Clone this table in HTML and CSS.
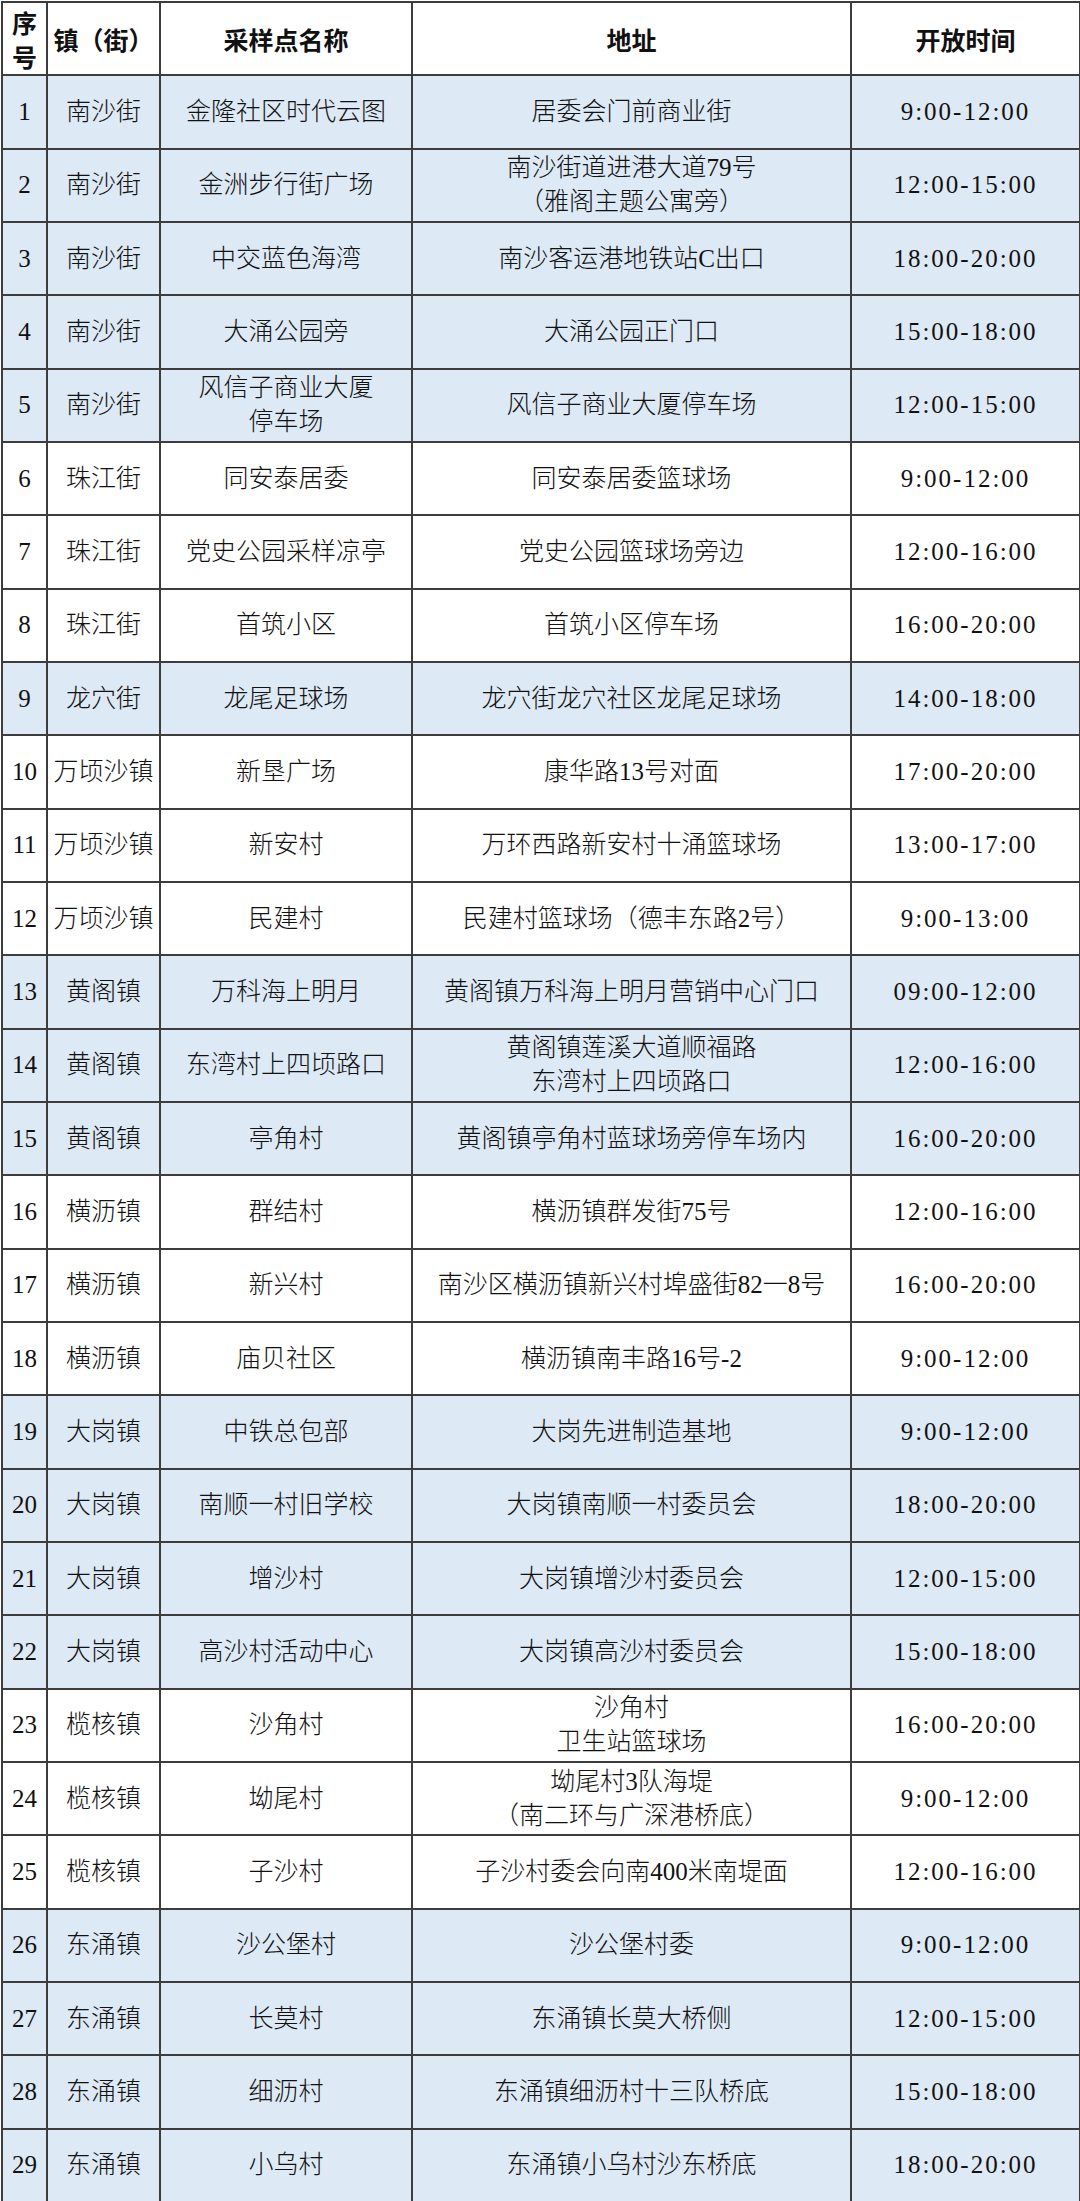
FILE: index.html
```html
<!DOCTYPE html>
<html lang="zh-CN">
<head>
<meta charset="utf-8">
<title>核酸采样点</title>
<link rel="stylesheet" href="styles.css">
</head>
<body>
<table class="sheet">
  <colgroup>
    <col class="c-no">
    <col class="c-town">
    <col class="c-name">
    <col class="c-addr">
    <col class="c-time">
  </colgroup>
  <thead>
    <tr class="head">
      <th class="no-head">序号</th>
      <th>镇（街）</th>
      <th>采样点名称</th>
      <th>地址</th>
      <th>开放时间</th>
    </tr>
  </thead>
  <tbody>
    <tr class="blue"><td>1</td><td>南沙街</td><td>金隆社区时代云图</td><td>居委会门前商业街</td><td class="time">9:00-12:00</td></tr>
    <tr class="blue"><td>2</td><td>南沙街</td><td>金洲步行街广场</td><td>南沙街道进港大道79号<br>（雅阁主题公寓旁）</td><td class="time">12:00-15:00</td></tr>
    <tr class="blue"><td>3</td><td>南沙街</td><td>中交蓝色海湾</td><td>南沙客运港地铁站C出口</td><td class="time">18:00-20:00</td></tr>
    <tr class="blue"><td>4</td><td>南沙街</td><td>大涌公园旁</td><td>大涌公园正门口</td><td class="time">15:00-18:00</td></tr>
    <tr class="blue"><td>5</td><td>南沙街</td><td>风信子商业大厦<br>停车场</td><td>风信子商业大厦停车场</td><td class="time">12:00-15:00</td></tr>
    <tr><td>6</td><td>珠江街</td><td>同安泰居委</td><td>同安泰居委篮球场</td><td class="time">9:00-12:00</td></tr>
    <tr><td>7</td><td>珠江街</td><td>党史公园采样凉亭</td><td>党史公园篮球场旁边</td><td class="time">12:00-16:00</td></tr>
    <tr><td>8</td><td>珠江街</td><td>首筑小区</td><td>首筑小区停车场</td><td class="time">16:00-20:00</td></tr>
    <tr class="blue"><td>9</td><td>龙穴街</td><td>龙尾足球场</td><td>龙穴街龙穴社区龙尾足球场</td><td class="time">14:00-18:00</td></tr>
    <tr><td>10</td><td>万顷沙镇</td><td>新垦广场</td><td>康华路13号对面</td><td class="time">17:00-20:00</td></tr>
    <tr><td>11</td><td>万顷沙镇</td><td>新安村</td><td>万环西路新安村十涌篮球场</td><td class="time">13:00-17:00</td></tr>
    <tr><td>12</td><td>万顷沙镇</td><td>民建村</td><td>民建村篮球场（德丰东路2号）</td><td class="time">9:00-13:00</td></tr>
    <tr class="blue"><td>13</td><td>黄阁镇</td><td>万科海上明月</td><td>黄阁镇万科海上明月营销中心门口</td><td class="time">09:00-12:00</td></tr>
    <tr class="blue"><td>14</td><td>黄阁镇</td><td>东湾村上四顷路口</td><td>黄阁镇莲溪大道顺福路<br>东湾村上四顷路口</td><td class="time">12:00-16:00</td></tr>
    <tr class="blue"><td>15</td><td>黄阁镇</td><td>亭角村</td><td>黄阁镇亭角村蓝球场旁停车场内</td><td class="time">16:00-20:00</td></tr>
    <tr><td>16</td><td>横沥镇</td><td>群结村</td><td>横沥镇群发街75号</td><td class="time">12:00-16:00</td></tr>
    <tr><td>17</td><td>横沥镇</td><td>新兴村</td><td>南沙区横沥镇新兴村埠盛街82一8号</td><td class="time">16:00-20:00</td></tr>
    <tr><td>18</td><td>横沥镇</td><td>庙贝社区</td><td>横沥镇南丰路16号-2</td><td class="time">9:00-12:00</td></tr>
    <tr class="blue"><td>19</td><td>大岗镇</td><td>中铁总包部</td><td>大岗先进制造基地</td><td class="time">9:00-12:00</td></tr>
    <tr class="blue"><td>20</td><td>大岗镇</td><td>南顺一村旧学校</td><td>大岗镇南顺一村委员会</td><td class="time">18:00-20:00</td></tr>
    <tr class="blue"><td>21</td><td>大岗镇</td><td>增沙村</td><td>大岗镇增沙村委员会</td><td class="time">12:00-15:00</td></tr>
    <tr class="blue"><td>22</td><td>大岗镇</td><td>高沙村活动中心</td><td>大岗镇高沙村委员会</td><td class="time">15:00-18:00</td></tr>
    <tr><td>23</td><td>榄核镇</td><td>沙角村</td><td>沙角村<br>卫生站篮球场</td><td class="time">16:00-20:00</td></tr>
    <tr><td>24</td><td>榄核镇</td><td>坳尾村</td><td>坳尾村3队海堤<br>（南二环与广深港桥底）</td><td class="time">9:00-12:00</td></tr>
    <tr><td>25</td><td>榄核镇</td><td>子沙村</td><td>子沙村委会向南400米南堤面</td><td class="time">12:00-16:00</td></tr>
    <tr class="blue"><td>26</td><td>东涌镇</td><td>沙公堡村</td><td>沙公堡村委</td><td class="time">9:00-12:00</td></tr>
    <tr class="blue"><td>27</td><td>东涌镇</td><td>长莫村</td><td>东涌镇长莫大桥侧</td><td class="time">12:00-15:00</td></tr>
    <tr class="blue"><td>28</td><td>东涌镇</td><td>细沥村</td><td>东涌镇细沥村十三队桥底</td><td class="time">15:00-18:00</td></tr>
    <tr class="blue"><td>29</td><td>东涌镇</td><td>小乌村</td><td>东涌镇小乌村沙东桥底</td><td class="time">18:00-20:00</td></tr>
  </tbody>
</table>
</body>
</html>
```
FILE: styles.css
```css
html, body {
  margin: 0;
  padding: 0;
  background: #ffffff;
}

.sheet {
  border-collapse: collapse;
  table-layout: fixed;
  width: 1078px;
  margin: 1px 0 0 1px;
  color: #111111;
  font-family: "Liberation Serif", "Noto Sans CJK SC", serif;
  font-size: 25px;
  line-height: 34px;
}

.c-no { width: 45px; }
.c-town { width: 113px; }
.c-name { width: 252px; }
.c-addr { width: 439px; }
.c-time { width: 229px; }

.sheet tr {
  height: 73.33px;
}

.sheet th,
.sheet td {
  border: 2px solid #3d3d3d;
  padding: 0;
  text-align: center;
  vertical-align: middle;
  white-space: nowrap;
}

.sheet td {
  font-weight: 300;
}

.sheet th {
  font-family: "Noto Sans CJK SC", sans-serif;
  font-weight: 700;
  font-size: 25px;
  background: #ffffff;
}

.sheet th.no-head {
  white-space: normal;
  line-height: 34px;
  padding: 0 6px;
}

.blue td {
  background: #dde9f5;
}

.time {
  letter-spacing: 2px;
}
```
